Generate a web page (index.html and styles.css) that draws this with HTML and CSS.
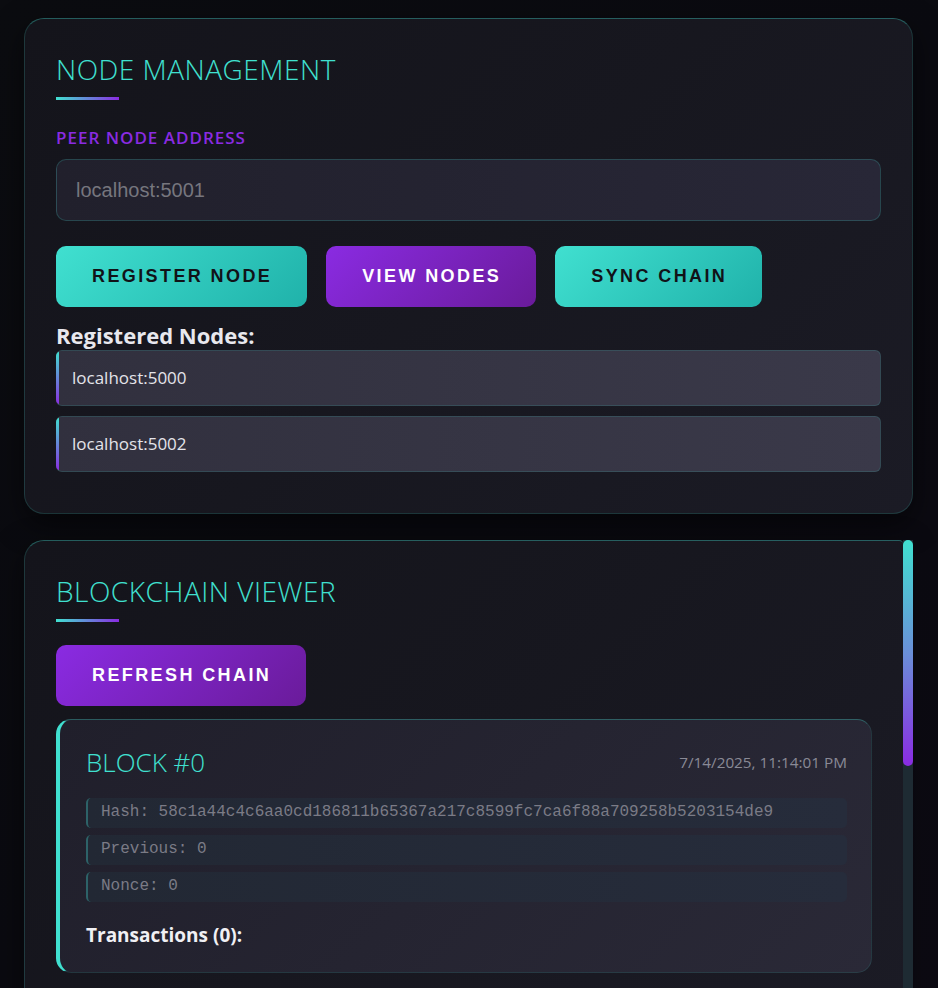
FILE: index.html
```html
<!DOCTYPE html>
<html lang="en">
<head>
<meta charset="utf-8">
<title>Blockchain Node</title>
<link rel="stylesheet" href="styles.css">
</head>
<body>
<main class="container">
  <section class="card">
    <h2 class="card-title">Node Management</h2>
    <label class="field-label" for="peer">Peer Node Address</label>
    <input class="text-input" id="peer" type="text" placeholder="localhost:5001">
    <div class="btn-row">
      <button class="btn btn-teal">Register Node</button>
      <button class="btn btn-purple">View Nodes</button>
      <button class="btn btn-teal">Sync Chain</button>
    </div>
    <h3 class="list-title">Registered Nodes:</h3>
    <ul class="node-list">
      <li class="node-item">localhost:5000</li>
      <li class="node-item">localhost:5002</li>
    </ul>
  </section>

  <div class="viewer">
    <section class="card card-viewer">
      <h2 class="card-title">Blockchain Viewer</h2>
      <div class="btn-row btn-row-tight">
        <button class="btn btn-purple">Refresh Chain</button>
      </div>
      <div class="chain">
        <article class="block">
          <header class="block-head">
            <h3 class="block-title">Block #0</h3>
            <span class="block-time">7/14/2025, 11:14:01 PM</span>
          </header>
          <div class="block-field">Hash: 58c1a44c4c6aa0cd186811b65367a217c8599fc7ca6f88a709258b5203154de9</div>
          <div class="block-field">Previous: 0</div>
          <div class="block-field">Nonce: 0</div>
          <h4 class="tx-title">Transactions (0):</h4>
        </article>
      </div>
    </section>
    <div class="scrollbar" aria-hidden="true">
      <div class="scroll-thumb"></div>
    </div>
  </div>
</main>
</body>
</html>
```

FILE: styles.css
```css
* { box-sizing: border-box; }

html, body {
  margin: 0;
  padding: 0;
}

body {
  background: linear-gradient(135deg, #0b0c10 0%, #0a0a10 50%, #0c0a12 100%);
  min-height: 100vh;
  font-family: "Open Sans", "Noto Sans", sans-serif;
  color: #e6e6ee;
  overflow: hidden;
}

.container {
  padding: 18px 25px 0 24px;
  display: flex;
  flex-direction: column;
  gap: 26px;
}

.card {
  background: linear-gradient(135deg, #14141b 0%, #17171f 50%, #1b1b25 100%);
  border: 1px solid rgba(64, 224, 208, 0.16);
  border-top-color: rgba(64, 224, 208, 0.35);
  border-radius: 20px;
  padding: 31px;
  box-shadow: 0 10px 30px rgba(0, 0, 0, 0.5);
}

.viewer {
  display: flex;
  align-items: stretch;
  height: 470px;
}

.card-viewer {
  flex: 1;
  min-width: 0;
  overflow: hidden;
  border-right: none;
  border-top-right-radius: 4px;
  border-bottom-right-radius: 0;
}

.scrollbar {
  width: 10px;
  flex: none;
  background: #1e2b33;
  display: flex;
  flex-direction: column;
}

.scroll-thumb {
  height: 226px;
  border-radius: 5px;
  background: linear-gradient(180deg, #40e0d0 0%, #6a8fd8 50%, #8a2be2 100%);
}

.card-title {
  margin: 0;
  font-size: 28px;
  font-weight: 300;
  letter-spacing: 0.5px;
  text-transform: uppercase;
  color: #40e0d0;
  line-height: 38px;
}

.card-title::after {
  content: "";
  display: block;
  width: 63px;
  height: 3px;
  margin-top: 9px;
  background: linear-gradient(90deg, #40e0d0, #8a2be2);
}

.field-label {
  display: block;
  margin-top: 26px;
  font-size: 17px;
  font-weight: 600;
  letter-spacing: 1px;
  text-transform: uppercase;
  color: #8a2be2;
  line-height: 23px;
}

.text-input {
  display: block;
  width: 100%;
  margin-top: 10px;
  height: 62px;
  padding: 0 19px;
  background: linear-gradient(90deg, #21202c, #282737);
  border: 1px solid rgba(64, 224, 208, 0.2);
  border-radius: 10px;
  font-family: "Liberation Sans", Arial, sans-serif;
  font-size: 20px;
  color: #e6e6ee;
  outline: none;
}
.text-input::placeholder { color: #76767e; }

.btn-row {
  display: flex;
  gap: 19px;
  margin-top: 25px;
}

.btn-row-tight { margin-top: 23px; }

.btn {
  border: none;
  border-radius: 10px;
  padding: 20px 35px 20px 36px;
  line-height: 21px;
  font-family: "Liberation Sans", Arial, sans-serif;
  font-size: 18px;
  font-weight: 700;
  letter-spacing: 2.4px;
  text-transform: uppercase;
  cursor: pointer;
}

.btn-teal {
  background: linear-gradient(135deg, #40e0d0 0%, #20b2aa 100%);
  color: #111218;
}

.btn-purple {
  background: linear-gradient(135deg, #8a2be2 0%, #6a1b9a 100%);
  color: #ffffff;
}

.list-title {
  margin: 14px 0 1px;
  font-size: 22px;
  font-weight: 700;
  line-height: 28px;
  color: #e8e8ee;
}

.node-list {
  list-style: none;
  margin: 0;
  padding: 0 0 10px;
  display: flex;
  flex-direction: column;
  gap: 10px;
}

.node-item {
  position: relative;
  background: linear-gradient(90deg, #31303e, #3a3949);
  border: 1px solid rgba(64, 224, 208, 0.14);
  border-left: none;
  border-radius: 6px;
  padding: 15px 16px;
  font-size: 17px;
  line-height: 24px;
  color: #e4e4ea;
  overflow: hidden;
}

.node-item::before {
  content: "";
  position: absolute;
  left: 0;
  top: 0;
  bottom: 0;
  width: 3px;
  background: linear-gradient(180deg, #40e0d0, #8a2be2);
}

.chain {
  margin-top: 13px;
  display: flex;
  flex-direction: column;
  gap: 20px;
}

.block {
  background: linear-gradient(135deg, #201f2b 0%, #252431 50%, #2a2937 100%);
  border: 1px solid rgba(64, 224, 208, 0.12);
  border-top-color: rgba(64, 224, 208, 0.3);
  border-left: 4px solid #40e0d0;
  border-radius: 15px;
  padding: 24px 24px 24px 26px;
}

.block-head {
  display: flex;
  justify-content: space-between;
  align-items: center;
  margin-bottom: 18px;
}

.block-title {
  margin: 0;
  font-size: 26px;
  font-weight: 300;
  line-height: 36px;
  color: #40e0d0;
  text-transform: uppercase;
}

.block-time {
  font-size: 15.3px;
  color: #8a8a96;
}

.block-field {
  background: linear-gradient(90deg, #222834, #262c3b);
  border-left: 2px solid rgba(64, 224, 208, 0.3);
  border-radius: 5px;
  padding: 5px 12px 5px 13px;
  margin-bottom: 7.5px;
  font-family: "Liberation Mono", "Courier New", monospace;
  font-size: 16px;
  line-height: 19.5px;
  color: #7b7b86;
  white-space: nowrap;
  overflow: hidden;
}

.tx-title {
  margin: 21px 0 0;
  font-size: 19px;
  font-weight: 700;
  line-height: 25px;
  color: #f0f0f4;
}
```
